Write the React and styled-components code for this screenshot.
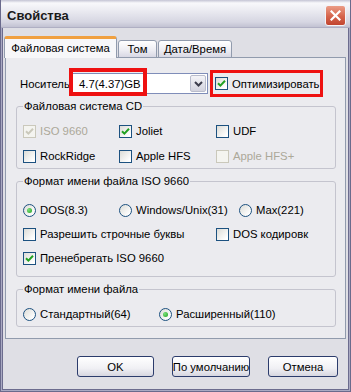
import styled, { createGlobalStyle } from 'styled-components'

const GlobalStyle = createGlobalStyle`
  html, body {
    margin: 0;
    padding: 0;
    background: #dfdfe5;
  }
  body {
    font-family: "Liberation Sans", Arial, sans-serif;
    font-size: 11.3px;
    color: #000;
  }
`

const Check = ({ on }) => (
  <svg width="9" height="9" viewBox="0 0 9 9">
    {on && <path d="M1 4.2 L3.4 6.6 L8 1.8" fill="none" stroke="currentColor" strokeWidth="2" />}
  </svg>
)

const CheckBox = ({ on, disabled, children }) => (
  <Option disabled={disabled}>
    <Box disabled={disabled}><Check on={on} /></Box>
    {children}
  </Option>
)

const Radio = ({ on, children }) => (
  <Option>
    <Circle>{on && <Dot />}</Circle>
    {children}
  </Option>
)

export default function App() {
  return (
    <>
      <GlobalStyle />
      <Window>
        <TitleBar>
          <Title>Свойства</Title>
          <CloseButton>
            <svg width="11" height="11" viewBox="0 0 11 11">
              <path d="M1.5 1.5 L9.5 9.5 M9.5 1.5 L1.5 9.5" stroke="#fff" strokeWidth="2.2" strokeLinecap="square" />
            </svg>
          </CloseButton>
        </TitleBar>

        <Body>
          <Tabs>
            <Tab active width={113}>Файловая система</Tab>
            <Tab width={39}>Том</Tab>
            <Tab width={74}>Дата/Время</Tab>
          </Tabs>

          <Panel>
            <MediaRow>
              <MediaLabel>Носитель</MediaLabel>
              <Combo>
                <ComboText>4.7(4.37)GB</ComboText>
                <ComboButton>
                  <svg width="9" height="6" viewBox="0 0 9 6">
                    <path d="M1 1 L4.5 4.5 L8 1" fill="none" stroke="#3c3c4c" strokeWidth="2" />
                  </svg>
                </ComboButton>
                <Highlight />
              </Combo>
              <Marked>
                <CheckBox on>Оптимизировать</CheckBox>
              </Marked>
            </MediaRow>

            <Group top={2} padTop={11} padBottom={5}>
              <legend>Файловая система CD</legend>
              <Grid gap={11}>
                <CheckBox on disabled>ISO 9660</CheckBox>
                <CheckBox on>Joliet</CheckBox>
                <CheckBox>UDF</CheckBox>
                <CheckBox>RockRidge</CheckBox>
                <CheckBox>Apple HFS</CheckBox>
                <CheckBox disabled>Apple HFS+</CheckBox>
              </Grid>
            </Group>

            <Group top={5} padTop={15} padBottom={11}>
              <legend>Формат имени файла ISO 9660</legend>
              <Stack>
                <Grid cols="96px 120px 1fr">
                  <Radio on>DOS(8.3)</Radio>
                  <Radio>Windows/Unix(31)</Radio>
                  <Radio>Max(221)</Radio>
                </Grid>
                <Grid cols="193px 1fr">
                  <CheckBox>Разрешить строчные буквы</CheckBox>
                  <CheckBox>DOS кодировк</CheckBox>
                </Grid>
                <CheckBox on>Пренебрегать ISO 9660</CheckBox>
              </Stack>
            </Group>

            <Group top={5} padTop={11} padBottom={5}>
              <legend>Формат имени файла</legend>
              <Grid cols="136px 1fr">
                <Radio>Стандартный(64)</Radio>
                <Radio on>Расширенный(110)</Radio>
              </Grid>
            </Group>
          </Panel>

          <Buttons>
            <Button width={77}>OK</Button>
            <Button width={78}>По умолчанию</Button>
            <Button width={70}>Отмена</Button>
          </Buttons>
        </Body>
      </Window>
    </>
  )
}

const Window = styled.div`
  width: 351px;
  height: 392px;
  box-sizing: border-box;
  display: flex;
  flex-direction: column;
  border: 1px solid #6a6a8c;
  border-top: none;
  background: #a9a9c2;
`

const TitleBar = styled.div`
  height: 28px;
  flex: none;
  display: flex;
  align-items: center;
  justify-content: space-between;
  padding: 0 4px 0 6px;
  background: linear-gradient(to bottom, #c4c4d4 0px, #f8f8fb 3px, #ececf2 10px, #d6d6e2 22px, #c2c2d2 27px, #9c9cb4 28px);
`

const Title = styled.div`
  font-size: 13px;
  font-weight: 700;
  color: #1a1a1a;
  padding-top: 2px;
`

const CloseButton = styled.div`
  width: 21px;
  height: 21px;
  box-sizing: border-box;
  margin-top: 2px;
  border: 1px solid #f4f4f8;
  border-radius: 3px;
  background: linear-gradient(to bottom, #eb9c86, #d5644c 55%, #c24530);
  display: flex;
  align-items: center;
  justify-content: center;
`

const Body = styled.div`
  flex: 1;
  display: flex;
  flex-direction: column;
  margin: 0 1px 1px;
  border: 1px solid #6c6c8e;
  border-top: none;
  background: #dfdfe5;
  padding: 9px 2px 0 1px;
`

const Tabs = styled.div`
  display: flex;
  align-items: flex-end;
  height: 21px;
  position: relative;
  z-index: 1;
  margin-bottom: -1px;
`

const Tab = styled.div`
  width: ${p => p.width}px;
  box-sizing: border-box;
  height: ${p => (p.active ? 22 : 18)}px;
  display: flex;
  align-items: center;
  justify-content: center;
  border: 1px solid #919bad;
  border-bottom: ${p => (p.active ? 'none' : '1px solid #919bad')};
  border-top: ${p => (p.active ? '3px solid #f0a040' : '1px solid #919bad')};
  border-radius: 3px 3px 0 0;
  margin-left: ${p => (p.active ? 0 : 1)}px;
  padding-bottom: ${p => (p.active ? 2 : 0)}px;
  background: ${p => (p.active ? '#f7f7f9' : 'linear-gradient(to bottom, #ffffff, #ececf2 60%, #d8d8e4)')};
  white-space: nowrap;
`

const Panel = styled.div`
  margin-left: 1px;
  height: 282px;
  box-sizing: border-box;
  border: 1px solid #919bad;
  background: #ebebef;
  padding: 12px 9px 0 10px;
`

const MediaRow = styled.div`
  display: flex;
  align-items: center;
  padding-left: 4px;
  height: 27px;
`

const MediaLabel = styled.div`
  width: 52px;
`

const Combo = styled.div`
  position: relative;
  width: 136px;
  height: 21px;
  box-sizing: border-box;
  border: 1px solid #7f8db9;
  background: #fff;
  display: flex;
  align-items: center;
`

const ComboText = styled.div`
  flex: 1;
  padding-left: 6px;
`

const ComboButton = styled.div`
  width: 16px;
  height: 17px;
  margin-right: 1px;
  box-sizing: border-box;
  border: 1px solid #b9bccc;
  border-radius: 2px;
  background: linear-gradient(to bottom, #f4f4f8, #d2d2de);
  display: flex;
  align-items: center;
  justify-content: center;
`

const Highlight = styled.div`
  position: absolute;
  left: -4px;
  top: -6px;
  width: 78px;
  height: 28px;
  box-sizing: border-box;
  border: 4px solid #ee1111;
`

const Marked = styled.div`
  margin-left: 2px;
  width: 113px;
  height: 27px;
  box-sizing: border-box;
  border: 3px solid #ee1111;
  padding-left: 2px;
  display: flex;
  align-items: center;
`

const Group = styled.fieldset`
  margin: ${p => p.top}px 0 0;
  padding: ${p => p.padTop}px 6px ${p => p.padBottom}px;
  border: 1px solid #c4c4ce;
  border-radius: 3px;
  min-width: 0;

  legend {
    padding: 0 1px;
    line-height: 14px;
  }
`

const Stack = styled.div`
  display: flex;
  flex-direction: column;
  gap: 10px;
`

const Grid = styled.div`
  display: grid;
  grid-template-columns: ${p => p.cols || '96px 97px 1fr'};
  row-gap: ${p => p.gap || 0}px;
`

const Option = styled.div`
  display: flex;
  align-items: center;
  gap: 4px;
  height: 14px;
  white-space: nowrap;
  color: ${p => (p.disabled ? '#aca899' : '#000')};
`

const Box = styled.span`
  width: 13px;
  height: 13px;
  box-sizing: border-box;
  flex: none;
  border: 1px solid ${p => (p.disabled ? '#cac8bb' : '#1c5180')};
  background: ${p => (p.disabled ? '#f4f4f0' : 'linear-gradient(135deg, #dcdcd7, #ffffff 85%)')};
  color: ${p => (p.disabled ? '#cac8bb' : '#21a121')};
  display: flex;
  align-items: center;
  justify-content: center;
`

const Circle = styled.span`
  width: 13px;
  height: 13px;
  box-sizing: border-box;
  flex: none;
  border: 1px solid #1c5180;
  border-radius: 50%;
  background: linear-gradient(135deg, #dcdcd7, #ffffff 85%);
  display: flex;
  align-items: center;
  justify-content: center;
`

const Dot = styled.span`
  width: 5px;
  height: 5px;
  border-radius: 50%;
  background: radial-gradient(circle at 35% 35%, #7ae07a, #21a121);
`

const Buttons = styled.div`
  display: flex;
  justify-content: flex-end;
  gap: 18px;
  margin-top: 17px;
  padding-right: 8px;
`

const Button = styled.div`
  width: ${p => p.width}px;
  height: 21px;
  box-sizing: border-box;
  border: 1px solid #2c3c6c;
  border-radius: 3px;
  background: linear-gradient(to bottom, #ffffff, #f0f0f4 60%, #d6d6e0);
  display: flex;
  align-items: center;
  justify-content: center;
  white-space: nowrap;
`
